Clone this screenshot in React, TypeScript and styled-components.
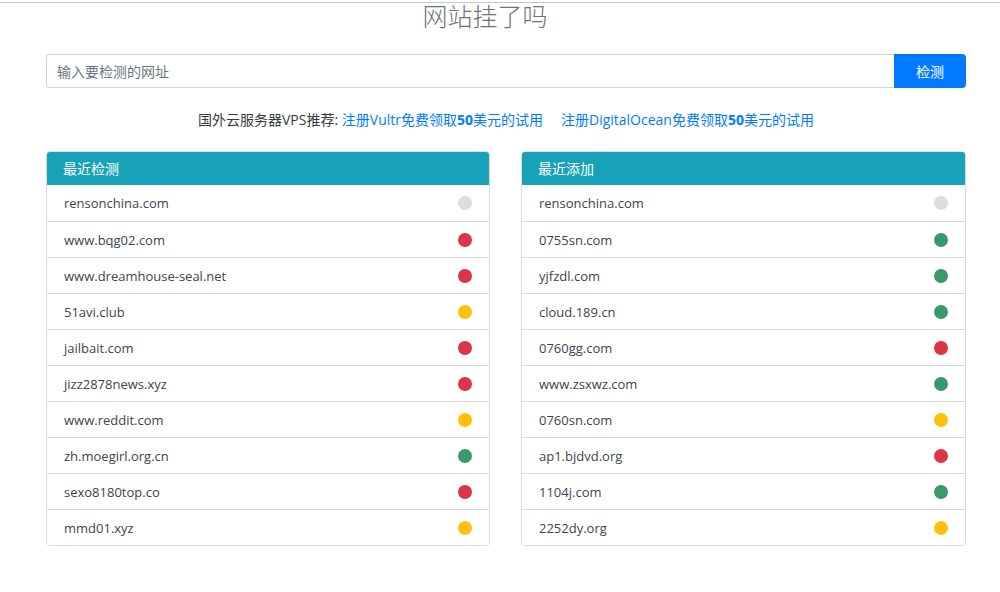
import React from "react";
import styled, { createGlobalStyle } from "styled-components";

const Global = createGlobalStyle`
  html, body { margin: 0; padding: 0; background: #fff; }
  body {
    font-family: "Open Sans", "Noto Sans CJK SC", sans-serif;
    font-size: 14px;
    color: #212529;
  }
`;

const TopRule = styled.div`
  height: 2px;
  border-bottom: 1px solid #c8c8c8;
`;

const Page = styled.div`
  width: 920px;
  margin-left: 46px;
`;

const Title = styled.h1`
  margin: 0;
  margin-left: -42px;
  text-align: center;
  font-family: "Noto Sans CJK SC", sans-serif;
  font-weight: 300;
  font-size: 25px;
  line-height: 25px;
  color: #6c757d;
  height: 25px;
`;

const SearchRow = styled.form`
  display: flex;
  margin-top: 26px;
  height: 34px;
`;

const Input = styled.input`
  flex: 1;
  box-sizing: border-box;
  height: 34px;
  border: 1px solid #ced4da;
  border-right: none;
  border-radius: 4px 0 0 4px;
  padding: 0 10px;
  font-family: "Noto Sans CJK SC", sans-serif;
  font-size: 14px;
  color: #495057;
  outline: none;
  &::placeholder { color: #6c757d; }
`;

const Button = styled.button`
  width: 72px;
  height: 34px;
  border: none;
  border-radius: 0 4px 4px 0;
  background: #007bff;
  color: #fff;
  font-family: "Noto Sans CJK SC", sans-serif;
  font-size: 14px;
  cursor: pointer;
`;

const Promo = styled.p`
  margin: 22px 0 0;
  text-align: center;
  font-family: "Open Sans", "Noto Sans CJK SC", sans-serif;
  font-size: 14px;
  line-height: 20px;
  color: #343a40;
  height: 20px;
`;

const Link = styled.a<{ $gap?: number }>`
  color: #007bff;
  text-decoration: none;
  margin-right: ${(p) => p.$gap ?? 0}px;
  b { font-weight: 700; }
`;

const Columns = styled.div`
  display: grid;
  grid-template-columns: 444px 445px;
  column-gap: 31px;
  margin-top: 21px;
`;

const Card = styled.section`
  border: 1px solid #dcdcdc;
  border-radius: 4px;
  overflow: hidden;
`;

const CardHeader = styled.div`
  height: 34px;
  background: #17a2b8;
  color: #fff;
  display: flex;
  align-items: center;
  padding-left: 17px;
  font-family: "Noto Sans CJK SC", sans-serif;
  font-size: 14px;
  margin: -1px -1px 0;
`;

const Row = styled.div`
  display: flex;
  align-items: center;
  justify-content: space-between;
  height: 35px;
  padding: 0 17px;
  border-top: 1px solid #dcdcdc;
  &:first-of-type { border-top: none; height: 36px; }
  font-size: 13px;
  color: #3d444b;
`;

const Dot = styled.span<{ $c: string }>`
  width: 14px;
  height: 14px;
  border-radius: 50%;
  background: ${(p) => p.$c};
`;

const colors: Record<string, string> = {
  g: "#dddddd",
  r: "#dc3545",
  y: "#ffc107",
  s: "#3a9a6e",
};

const recent: [string, string][] = [
  ["rensonchina.com", "g"],
  ["www.bqg02.com", "r"],
  ["www.dreamhouse-seal.net", "r"],
  ["51avi.club", "y"],
  ["jailbait.com", "r"],
  ["jizz2878news.xyz", "r"],
  ["www.reddit.com", "y"],
  ["zh.moegirl.org.cn", "s"],
  ["sexo8180top.co", "r"],
  ["mmd01.xyz", "y"],
];

const added: [string, string][] = [
  ["rensonchina.com", "g"],
  ["0755sn.com", "s"],
  ["yjfzdl.com", "s"],
  ["cloud.189.cn", "s"],
  ["0760gg.com", "r"],
  ["www.zsxwz.com", "s"],
  ["0760sn.com", "y"],
  ["ap1.bjdvd.org", "r"],
  ["1104j.com", "s"],
  ["2252dy.org", "y"],
];

function List({ title, items }: { title: string; items: [string, string][] }) {
  return (
    <Card>
      <CardHeader>{title}</CardHeader>
      <div>
        {items.map(([d, c]) => (
          <Row key={d}>
            <span>{d}</span>
            <Dot $c={colors[c]} />
          </Row>
        ))}
      </div>
    </Card>
  );
}

export default function App() {
  return (
    <>
      <Global />
      <TopRule />
      <Page>
        <Title>网站挂了吗</Title>
        <SearchRow onSubmit={(e) => e.preventDefault()}>
          <Input placeholder="输入要检测的网址" />
          <Button type="submit">检测</Button>
        </SearchRow>
        <Promo>
          国外云服务器VPS推荐:{" "}
          <Link href="#" $gap={18}>
            注册Vultr免费领取<b>50</b>美元的试用
          </Link>
          <Link href="#">
            注册DigitalOcean免费领取<b>50</b>美元的试用
          </Link>
        </Promo>
        <Columns>
          <List title="最近检测" items={recent} />
          <List title="最近添加" items={added} />
        </Columns>
      </Page>
    </>
  );
}
